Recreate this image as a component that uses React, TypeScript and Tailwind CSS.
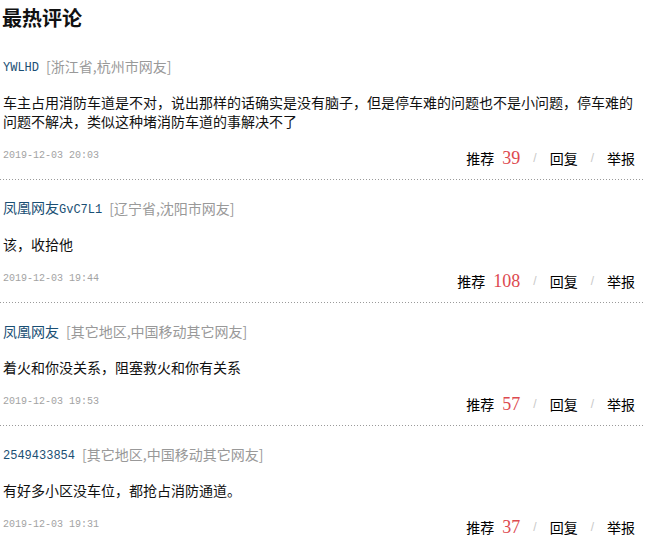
import React from 'react';

interface Comment {
  id: number;
  name: string;
  location: string;
  text: string;
  time: string;
  likes: number;
}

const comments: Comment[] = [
  {
    id: 1,
    name: 'YWLHD',
    location: '[浙江省,杭州市网友]',
    text: '车主占用消防车道是不对，说出那样的话确实是没有脑子，但是停车难的问题也不是小问题，停车难的问题不解决，类似这种堵消防车道的事解决不了',
    time: '2019-12-03 20:03',
    likes: 39,
  },
  {
    id: 2,
    name: '凤凰网友GvC7L1',
    location: '[辽宁省,沈阳市网友]',
    text: '该，收拾他',
    time: '2019-12-03 19:44',
    likes: 108,
  },
  {
    id: 3,
    name: '凤凰网友',
    location: '[其它地区,中国移动其它网友]',
    text: '着火和你没关系，阻塞救火和你有关系',
    time: '2019-12-03 19:53',
    likes: 57,
  },
  {
    id: 4,
    name: '2549433854',
    location: '[其它地区,中国移动其它网友]',
    text: '有好多小区没车位，都抢占消防通道。',
    time: '2019-12-03 19:31',
    likes: 37,
  },
];

// latin parts of a nickname are drawn in a narrow mono face, like the old song-ti page
const Nick = ({ name }: { name: string }) => (
  <span className="text-[#1a4f74]">
    {name.split(/([\x00-\x7f]+)/).filter(Boolean).map((part, i) =>
      /^[\x00-\x7f]+$/.test(part) ? (
        <span key={i} className="font-['Liberation_Mono',monospace] text-[12px]">
          {part}
        </span>
      ) : (
        <span key={i}>{part}</span>
      )
    )}
  </span>
);

const Slash = () => (
  <span className="mx-[13px] text-[12px] text-[#c8c8c8] font-['Liberation_Sans',sans-serif]">/</span>
);

export default function App() {
  return (
    <div className="w-[643px] bg-white font-['Noto_Sans_CJK_SC',sans-serif] text-black">
      {/* Header */}
      <h2 className="h-[38px] pl-[2px] text-[20px] font-bold leading-[36px] text-[#111]">最热评论</h2>

      {/* Comment list */}
      {comments.map((c) => (
        <div key={c.id}>
          <div className="pt-[18px] pb-[11px] pl-[3px] pr-[8px]">
            <div className="flex items-center h-[20px] text-[14px] leading-[20px]">
              <Nick name={c.name} />
              <span className="ml-[7px] text-[#999]">{c.location}</span>
            </div>

            <p className="mt-[17px] text-[14px] leading-[19px] text-[#111]">{c.text}</p>

            <div className="mt-[15px] flex h-[22px] items-center justify-between">
              <span className="pb-[4px] font-['Liberation_Mono',monospace] text-[10px] text-[#a3a3a3]">{c.time}</span>
              <div className="flex items-center pt-[1px] text-[14px] leading-[20px]">
                <span>推荐</span>
                <span className="ml-[8px] font-['Liberation_Serif',serif] text-[18px] leading-[20px] text-[#dd4a4f]">{c.likes}</span>
                <Slash />
                <span>回复</span>
                <Slash />
                <span>举报</span>
              </div>
            </div>
          </div>
          {/* dotted rule */}
          <div className="h-px bg-[linear-gradient(to_right,#9a9a9a_1px,transparent_1px)] bg-[length:3px_1px]" />
        </div>
      ))}
    </div>
  );
}
